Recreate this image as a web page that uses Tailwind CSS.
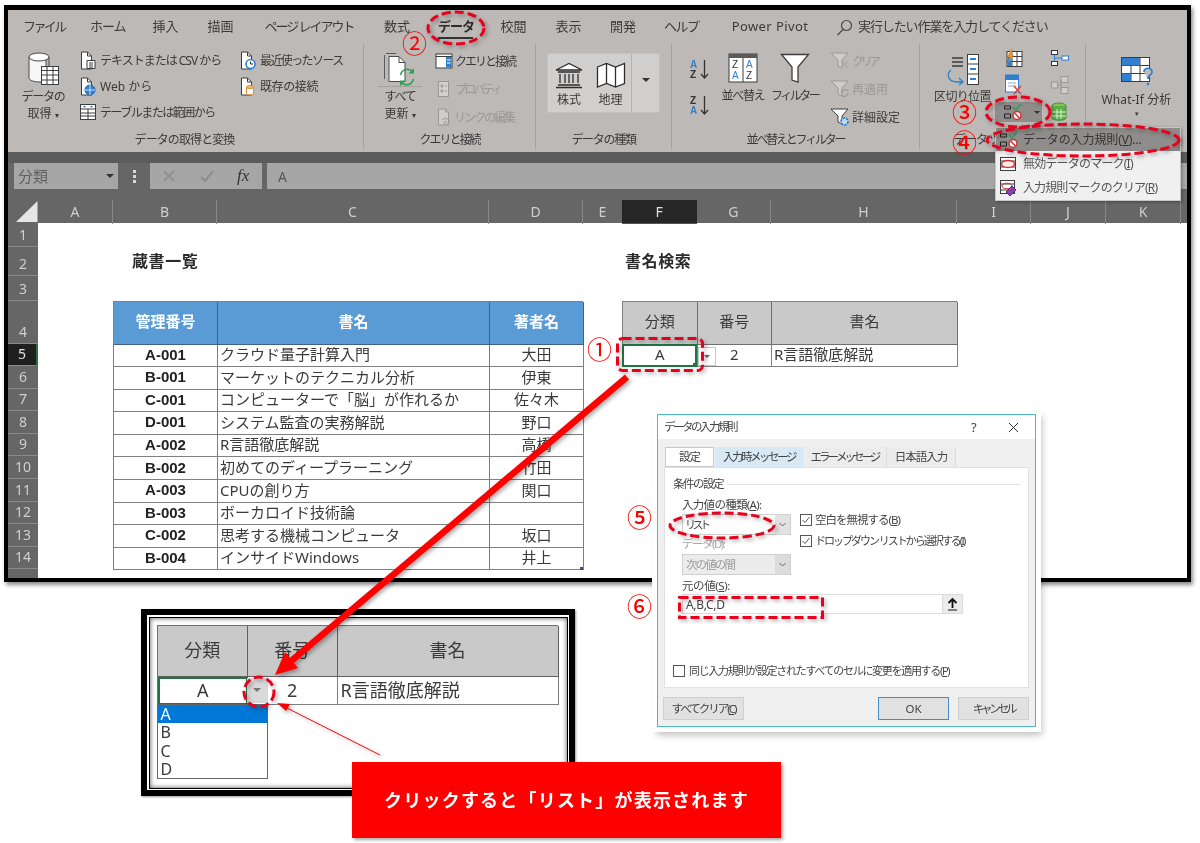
<!DOCTYPE html>
<html lang="ja">
<head>
<meta charset="UTF-8">
<title>データの入力規則</title>
<script src="https://cdn.jsdelivr.net/npm/@tailwindcss/browser@4"></script>
</head>
<body class="bg-white">
<div class="relative w-[1200px] h-[843px] overflow-hidden bg-white blur-[0.45px] font-['Noto_Sans','Noto_Sans_CJK_JP',sans-serif] text-[#3a3a3a]">

  <!-- Excel window -->
  <div class="ml-[4px] mt-[5px] w-[1187px] h-[577px] border-[4px] border-t-[5px] border-black shadow-[2px_3px_4px_rgba(0,0,0,.45)] overflow-hidden bg-white">

    <!-- tabs -->
    <div class="h-[37px] bg-[#bdb9b6] flex items-center pb-[3px] text-[13px] whitespace-nowrap">
      <span class="ml-[15px] w-[38px] text-center tracking-[-2.6px]">ファイル</span>
      <span class="ml-[29px] w-[34px] text-center tracking-[-1px]">ホーム</span>
      <span class="ml-[28px] w-[27px] text-center">挿入</span>
      <span class="ml-[28px] w-[27px] text-center">描画</span>
      <span class="ml-[30px] w-[90px] text-center tracking-[-2px]">ページ レイアウト</span>
      <span class="ml-[30px] w-[26px] text-center">数式</span>
      <span class="relative ml-[28px] w-[35px] text-center font-bold tracking-[-1px] text-[#2b2b2b]">データ<span class="absolute left-0 right-0 top-[20px] h-[2px] bg-[#333]"></span></span>
      <span class="ml-[27px] w-[27px] text-center">校閲</span>
      <span class="ml-[28px] w-[27px] text-center">表示</span>
      <span class="ml-[27px] w-[28px] text-center">開発</span>
      <span class="ml-[27px] w-[33px] text-center tracking-[-1.5px]">ヘルプ</span>
      <span class="ml-[33px] w-[80px] text-center tracking-[0.4px]">Power Pivot</span>
      <svg class="ml-[26px]" width="17" height="17" viewBox="0 0 17 17" fill="none" stroke="#4a4a4a" stroke-width="1.2"><circle cx="10.5" cy="6.5" r="5"/><path d="M7 10.5L1.5 16"/></svg>
      <span class="ml-[5px] w-[190px] tracking-[-1.1px]">実行したい作業を入力してください</span>
    </div>

    <!-- ribbon -->
    <div class="h-[105px] bg-[#bdb9b6] flex text-[12px] leading-[17px] whitespace-nowrap">
      <!-- データの取得と変換 -->
      <div class="w-[356px] -mt-[3px] h-[105px] border-r border-[#a4a19e] flex flex-col">
        <div class="h-[87px] pt-[3px] flex">
          <div class="ml-[9px] w-[52px] mt-[5px] flex flex-col items-center">
            <svg width="32" height="35" viewBox="0 0 32 35"><path d="M2 5v21c0 2 4 4 11 4h6V5z" fill="#f6f6f6" stroke="#4a4a4a"/><ellipse cx="12" cy="5" rx="10" ry="4" fill="#fff" stroke="#4a4a4a"/><path d="M22 5v9" stroke="#4a4a4a"/><rect x="14.500" y="14.500" width="17" height="18" fill="#fff" stroke="#3d3d3d"/><path d="M14.500 18.500h17M14.500 23h17M14.500 28h17M20 14.500v18M26 14.500v18" stroke="#3d3d3d" fill="none"/></svg>
            <span class="mt-[1px] tracking-[-1.2px]">データの</span>
            <span>取得 <span class="text-[8px]">▾</span></span>
          </div>
          <div class="ml-[11px] w-[160px] flex flex-col">
            <div class="h-[26px] flex items-center">
              <svg width="16" height="19" viewBox="0 0 16 19" fill="none" stroke="#3d3d3d"><path d="M1.500 1h6l4 4v13h-10z" fill="#fff"/><path d="M7.500 1v4h4"/><path d="M7 9.500h8v8H7z" fill="#fff"/><path d="M9 12h4M9 14h4M9 16h4"/></svg>
              <span class="ml-[4px] tracking-[-1px]">テキストまたは CSV から</span>
            </div>
            <div class="h-[26px] flex items-center">
              <svg width="16" height="19" viewBox="0 0 16 19" fill="none" stroke="#3d3d3d"><path d="M1.500 1h6l4 4v13h-10z" fill="#fff"/><path d="M7.500 1v4h4"/><circle cx="10" cy="13" r="5" fill="#2f7fce" stroke="#1d68b4"/><path d="M5 13h10M10 8v10" stroke="#cfe4f8"/></svg>
              <span class="ml-[4px]">Web から</span>
            </div>
            <div class="h-[26px] flex items-center -ml-[1px]">
              <svg width="17" height="18" viewBox="0 0 17 18" fill="none" stroke="#3d3d3d"><rect x="1.500" y="1.500" width="15" height="15" fill="#fff"/><path d="M1.500 6h15M1.500 10h15M1.500 13h15M9 6v10.500"/><path d="M4 3l1.500 2L7 3zM11 3l1.500 2L14 3z" fill="#3b83c9" stroke="none"/></svg>
              <span class="ml-[4px] tracking-[-1.5px]">テーブルまたは範囲から</span>
            </div>
          </div>
          <div class="w-[110px] flex flex-col">
            <div class="h-[26px] flex items-center">
              <svg width="16" height="19" viewBox="0 0 16 19" fill="none" stroke="#3d3d3d"><path d="M1.500 1h6l4 4v13h-10z" fill="#fff"/><path d="M7.500 1v4h4"/><circle cx="10.500" cy="13" r="4.500" fill="#fff" stroke="#2f7fce" stroke-width="1.600"/><path d="M10.500 10.500V13h2.500" stroke="#2b2b2b"/></svg>
              <span class="ml-[4px] tracking-[-1.6px]">最近使ったソース</span>
            </div>
            <div class="h-[26px] flex items-center">
              <svg width="16" height="19" viewBox="0 0 16 19" fill="none" stroke="#3d3d3d"><path d="M1.500 1h6l4 4v13h-10z" fill="#fff"/><path d="M7.500 1v4h4"/><path d="M6.500 10v7c0 1 7 1 7 0v-7" fill="#fff" stroke="#e08b2c"/><ellipse cx="10" cy="10" rx="3.500" ry="1.500" fill="#f3c07a" stroke="#e08b2c"/></svg>
              <span class="ml-[4px] tracking-[-0.4px]">既存の接続</span>
            </div>
          </div>
        </div>
        <div class="text-center tracking-[-0.9px] pr-[2px]">データの取得と変換</div>
      </div>
      <!-- クエリと接続 -->
      <div class="w-[172px] -mt-[3px] h-[105px] border-r border-[#a4a19e] flex flex-col">
        <div class="h-[87px] pt-[3px] flex">
          <div class="ml-[14px] w-[44px] mt-[5px] flex flex-col items-center">
            <svg width="34" height="35" viewBox="0 0 34 35" fill="none"><path d="M3 1.500h10M1.500 3v24" stroke="#5a5a5a"/><path d="M6 4.500h10l6 6v19H6z" fill="#fff" stroke="#4a4a4a"/><path d="M16 4.500v6h6" stroke="#4a4a4a"/><path d="M17.500 23a7 7 0 0 1 12-3.500M30.500 27a7 7 0 0 1-12 3.500" stroke="#2e9e52" stroke-width="1.500"/><path d="M31 16v5.500h-5.500zM17 34v-5.500h5.500z" fill="#2e9e52"/></svg>
            <div class="w-[44px] h-px bg-[#a4a19e] -mt-[1px] mb-[1px]"></div>
            <span class="tracking-[-1.2px]">すべて</span>
            <span>更新 <span class="text-[8px]">▾</span></span>
          </div>
          <div class="ml-[13px] flex flex-col">
            <div class="h-[28px] flex items-center">
              <svg width="18" height="16" viewBox="0 0 18 16" fill="none" stroke="#3d3d3d"><rect x="1" y="1" width="16" height="14" fill="#fff"/><path d="M1 3.500h16"/><rect x="11" y="4" width="5.500" height="10.500" fill="#2f7fce" stroke="none"/><path d="M12 7h3.500M12 10h3.500" stroke="#fff"/></svg>
              <span class="ml-[2px] tracking-[-2px]">クエリと接続</span>
            </div>
            <div class="h-[28px] flex items-center text-[#9a9896]">
              <svg width="18" height="18" viewBox="0 0 18 18" fill="#d3d0ce" stroke="#9a9896"><rect x="3.500" y="1.500" width="10" height="15"/><path d="M6 5h2v2H6zM6 10h2v2H6zM10 6h2M10 11h2" fill="none"/></svg>
              <span class="ml-[2px] tracking-[-2.800px]">プロパティ</span>
            </div>
            <div class="h-[28px] flex items-center text-[#9a9896]">
              <svg width="18" height="18" viewBox="0 0 18 18" fill="none" stroke="#9a9896"><path d="M3.500 1h7l3 3v13h-10z" fill="#cfccca"/><path d="M10.500 1v3h3"/><path d="M7 12c3-3 8-1 7 2s-5 3-5 1 3-2 3-1"/></svg>
              <span class="ml-[1px] tracking-[-2px]">リンクの編集</span>
            </div>
          </div>
        </div>
        <div class="text-center tracking-[-2px]">クエリと接続</div>
      </div>
      <!-- データの種類 -->
      <div class="w-[136px] -mt-[3px] h-[105px] border-r border-[#a4a19e] flex flex-col">
        <div class="h-[87px] pt-[9px] pl-[11px] flex">
          <div class="w-[113px] h-[60px] bg-[#d1cfcd] border border-[#c4c2c0] flex">
            <div class="w-[42px] flex flex-col items-center pt-[8px]">
              <svg width="30" height="27" viewBox="0 0 30 27" fill="none" stroke="#2e2e2e" stroke-width="1.300"><path d="M2 8L15 1.500 28 8z" fill="#fff"/><path d="M4 10h22M6 12v9M11 12v9M15 12v9M19 12v9M24 12v9M4 23h22M2 25.500h26"/></svg>
              <span class="mt-[2px]">株式</span>
            </div>
            <div class="w-[41px] flex flex-col items-center pt-[8px]">
              <svg width="30" height="27" viewBox="0 0 30 27" fill="#fff" stroke="#2e2e2e" stroke-width="1.300"><path d="M1.500 5l9-3.500 9 3.500 9-3.500v20l-9 3.500-9-3.500-9 3.500z"/><path d="M10.500 1.500v20M19.500 5v20" fill="none"/></svg>
              <span class="mt-[2px]">地理</span>
            </div>
            <div class="flex-1 border-l border-[#b5b3b1] flex items-center justify-center pb-[6px]">
              <span class="w-0 h-0 border-x-[4px] border-x-transparent border-t-[4px] border-t-[#333]"></span>
            </div>
          </div>
        </div>
        <div class="text-center tracking-[-1.3px]">データの種類</div>
      </div>
      <!-- 並べ替えとフィルター -->
      <div class="w-[248px] -mt-[3px] h-[105px] border-r border-[#a4a19e] flex flex-col">
        <div class="h-[87px] pt-[3px] flex">
          <div class="ml-[18px] w-[20px] flex flex-col pt-[11px] gap-[14px]">
            <svg width="20" height="22" viewBox="0 0 20 22" fill="none"><text x="0" y="10" font-size="10" font-weight="700" fill="#2f7fce" font-family="Liberation Sans">A</text><text x="0" y="20" font-size="10" font-weight="700" fill="#333" font-family="Liberation Sans">Z</text><path d="M14.500 2v18M11 16l3.500 4 3.500-4" stroke="#333" stroke-width="1.300"/></svg>
            <svg width="20" height="22" viewBox="0 0 20 22" fill="none"><text x="0" y="10" font-size="10" font-weight="700" fill="#333" font-family="Liberation Sans">Z</text><text x="0" y="20" font-size="10" font-weight="700" fill="#2f7fce" font-family="Liberation Sans">A</text><path d="M14.500 2v18M11 16l3.500 4 3.500-4" stroke="#333" stroke-width="1.300"/></svg>
          </div>
          <div class="ml-[10px] w-[46px] mt-[6px] flex flex-col items-center">
            <svg width="30" height="30" viewBox="0 0 30 30"><rect x="1" y="1" width="28" height="28" fill="#fff" stroke="#3d3d3d"/><rect x="1" y="1" width="28" height="4" fill="#5a5a5a"/><path d="M15 5v24" stroke="#3d3d3d"/><text x="4" y="15" font-size="10" font-weight="400" fill="#333" font-family="Liberation Sans">Z</text><text x="4" y="26" font-size="10" fill="#2f7fce" font-family="Liberation Sans">A</text><text x="18" y="15" font-size="10" fill="#2f7fce" font-family="Liberation Sans">A</text><text x="18" y="26" font-size="10" fill="#333" font-family="Liberation Sans">Z</text></svg>
            <span class="mt-[4px] tracking-[-1.3px]">並べ替え</span>
          </div>
          <div class="ml-[6px] w-[45px] mt-[6px] flex flex-col items-center">
            <svg width="30" height="30" viewBox="0 0 30 30"><path d="M1.500 1.500h27L18 14v15l-6-2V14z" fill="#fff" stroke="#3d3d3d" stroke-width="1.300"/></svg>
            <span class="mt-[4px] tracking-[-2.500px]">フィルター</span>
          </div>
          <div class="ml-[13px] flex flex-col">
            <div class="h-[28px] flex items-center text-[#9a9896]">
              <svg width="20" height="20" viewBox="0 0 20 20" fill="none" stroke="#9a9896"><path d="M1 2h17l-6 7v8l-4-2V9z" fill="#cfccca"/><path d="M11 10l7 7M18 10l-7 7" stroke="#adabaa" stroke-width="1.500"/></svg>
              <span class="ml-[2px] tracking-[-3.500px]">クリア</span>
            </div>
            <div class="h-[28px] flex items-center text-[#9a9896]">
              <svg width="20" height="20" viewBox="0 0 20 20" fill="none" stroke="#9a9896"><path d="M1 2h17l-6 7v8l-4-2V9z" fill="#cfccca"/><path d="M11 14a4 4 0 0 1 7-2M18 14a4 4 0 0 1-7 2" stroke-width="1.300"/></svg>
              <span class="ml-[2px]">再適用</span>
            </div>
            <div class="h-[28px] flex items-center">
              <svg width="20" height="20" viewBox="0 0 20 20" fill="none" stroke="#3d3d3d"><path d="M1 2h17l-6 7v8l-4-2V9z" fill="#fff"/><circle cx="14.500" cy="14.500" r="3.500" fill="#bfd9f2" stroke="#2f7fce" stroke-width="1.700" stroke-dasharray="2.500 1"/></svg>
              <span class="ml-[2px]">詳細設定</span>
            </div>
          </div>
        </div>
        <div class="text-center tracking-[-2.200px]">並べ替えとフィルター</div>
      </div>
      <!-- データ ツール -->
      <div class="w-[166px] -mt-[3px] h-[105px] border-r border-[#a4a19e] flex flex-col">
        <div class="h-[87px] flex">
          <div class="ml-[14px] w-[57px] mt-[9px] flex flex-col items-center">
            <svg width="34" height="33" viewBox="0 0 34 33" fill="none"><rect x="21.500" y="1.500" width="11" height="30" fill="#fff" stroke="#3d3d3d"/><path d="M21.500 11h11M21.500 21h11" stroke="#3d3d3d"/><path d="M24 6h6M24 16h6M24 26h6" stroke="#2f7fce" stroke-width="2"/><path d="M6 5h11M6 9h11M6 13h11" stroke="#3d3d3d" stroke-width="1.300"/><path d="M5 17c-5 4-3 12 6 12h6M13 25l4 4-4 3" stroke="#2f7fce" stroke-width="1.300"/></svg>
            <span class="mt-[2px] tracking-[-0.6px]">区切り位置</span>
          </div>
          <div class="ml-[4px] w-[47px] flex flex-col">
            <div class="h-[27px] flex items-center pl-[8px] pt-[1px]">
              <svg width="20" height="20" viewBox="0 0 20 20" fill="none"><rect x="4" y="3.500" width="15" height="15" fill="#fff" stroke="#3d3d3d"/><path d="M4 8.500h15M4 13.500h15M9 3.500v15M14 3.500v15" stroke="#3d3d3d"/><rect x="4.500" y="9" width="4" height="9" fill="#2f7fce"/><path d="M8 1L4 9h3l-2 6 6-8H8l2-6z" fill="#e8912d"/></svg>
            </div>
            <div class="h-[27px] flex items-center pl-[8px]">
              <svg width="20" height="21" viewBox="0 0 20 21" fill="none"><rect x="2.500" y="1" width="13" height="17" fill="#fff" stroke="#2f7fce"/><rect x="2.500" y="1" width="13" height="5" fill="#2f7fce"/><path d="M5 9h8M5 12h8" stroke="#7aaee0"/><path d="M11 12l7 8M18 12l-7 8" stroke="#d9443a" stroke-width="1.500"/></svg>
            </div>
            <div class="h-[20px] mt-[4px] bg-[#8f8d8b] flex items-center pl-[8px]">
              <svg width="20" height="18" viewBox="0 0 20 18" fill="none"><path d="M1.500 3h6M1.500 6h6M1.500 3v3M7.500 3v3M1.500 11h6M1.500 15h6M1.500 11v4M7.500 11v4" stroke="#222"/><path d="M10 4l3 3 5-6" stroke="#2e9e52" stroke-width="1.500"/><circle cx="14" cy="12.500" r="4" fill="#fff" stroke="#d32f2f" stroke-width="1.500"/><path d="M11.500 10l5 5" stroke="#d32f2f" stroke-width="1.500"/></svg>
              <span class="ml-[11px] w-0 h-0 border-x-[3px] border-x-transparent border-t-[3px] border-t-[#333]"></span>
            </div>
          </div>
          <div class="ml-[8px] w-[24px] flex flex-col">
            <div class="h-[27px] flex items-center pt-[1px]">
              <svg width="20" height="18" viewBox="0 0 20 18" fill="none"><rect x="1.500" y="1.500" width="6" height="4" stroke="#333" fill="#fff"/><rect x="1.500" y="12.500" width="6" height="4" stroke="#333" fill="#fff"/><rect x="12" y="7" width="6.500" height="4" stroke="#2f7fce" fill="#fff"/><path d="M4.500 5.500v7M4.500 9H12" stroke="#2f7fce"/></svg>
            </div>
            <div class="h-[27px] flex items-center">
              <svg width="20" height="20" viewBox="0 0 20 20" fill="#cfccca" stroke="#9a9896"><rect x="1.500" y="7" width="6" height="6"/><rect x="11" y="1.500" width="7" height="6"/><rect x="11" y="12.500" width="7" height="6"/><path d="M7.500 10H11M11 5v10" fill="none"/></svg>
            </div>
            <div class="h-[20px] mt-[4px] flex items-center">
              <svg width="18" height="20" viewBox="0 0 18 20" fill="none"><ellipse cx="9" cy="4" rx="7" ry="3" fill="#8ec04f" stroke="#3f8f3a"/><path d="M2 4v12c0 3 14 3 14 0V4" fill="#5bb04b" stroke="#3f8f3a"/><path d="M7 7v10M11 7v10M2 10h14M2 14h14" stroke="#dff0d0"/></svg>
            </div>
          </div>
        </div>
        <div class="pl-[34px] tracking-[-1px]">データ ツール</div>
      </div>
      <!-- What-If -->
      <div class="flex-1 -mt-[3px] h-[105px] flex flex-col items-center pt-[12px]">
        <svg width="34" height="31" viewBox="0 0 34 31" fill="none"><rect x="1.500" y="1.500" width="28" height="24" fill="#fff" stroke="#3d3d3d"/><path d="M1.500 9.500h28M1.500 17.500h28M11 1.500v24M20 1.500v24" stroke="#3d3d3d"/><rect x="2" y="2" width="9" height="7.500" fill="#2f7fce"/><rect x="11" y="2" width="9" height="7.500" fill="#2f7fce"/><rect x="2" y="17.500" width="9" height="7.500" fill="#2f7fce"/><path d="M24 16c0-5 8-5 8 0 0 3-4 3-4 7" stroke="#2f7fce" stroke-width="1.700" fill="#bdb9b6"/><circle cx="28" cy="28" r="1.300" fill="#2f7fce"/></svg>
        <span class="mt-[4px] tracking-[0.1px]">What-If 分析</span>
        <span class="mt-[1px] text-[7px] leading-[10px]">▾</span>
      </div>
    </div>

    <!-- dark strip -->
    <div class="h-[11px] bg-[#5c5c5c]"></div>

    <!-- formula bar -->
    <div class="h-[26px] bg-[#666666] flex text-[15px] text-[#5f5f5f]">
      <div class="ml-[6px] w-[104px] bg-[#a6a6a6] flex items-center justify-between pl-[4px] pr-[4px]">
        <span>分類</span>
        <span class="w-0 h-0 border-x-[4px] border-x-transparent border-t-[4px] border-t-[#333]"></span>
      </div>
      <div class="w-[32px] flex flex-col items-center justify-center gap-[2px]">
        <span class="w-[3px] h-[3px] bg-[#d8d8d8]"></span><span class="w-[3px] h-[3px] bg-[#d8d8d8]"></span><span class="w-[3px] h-[3px] bg-[#d8d8d8]"></span>
      </div>
      <div class="w-[112px] bg-[#a6a6a6] flex items-center pl-[12px] gap-[24px]">
        <svg width="14" height="14" viewBox="0 0 14 14" fill="none" stroke="#8c8c8c" stroke-width="1.600"><path d="M2 2l10 10M12 2L2 12"/></svg>
        <svg width="14" height="14" viewBox="0 0 14 14" fill="none" stroke="#8c8c8c" stroke-width="2"><path d="M1 8l4 4 8-10"/></svg>
        <span class="font-['Liberation_Serif',serif] italic text-[17px] text-[#333] -ml-[1px]">fx</span>
      </div>
      <div class="ml-[5px] flex-1 bg-[#a6a6a6] flex items-center pl-[11px] text-[#555] text-[14px]">A</div>
    </div>

    <div class="h-[11px] bg-[#666666]"></div>

    <!-- column headers -->
    <div class="h-[23px] bg-[#666666] grid grid-cols-[30px_75px_104px_272px_94px_39px_74.5px_74.5px_186px_74px_75px_75px_6px] text-[14px] text-[#cfcfcf] leading-[23px] text-center">
      <div class="pl-[8px]"><svg width="22" height="22" viewBox="0 0 22 22"><path d="M21.500 1v21H0z" fill="#e6e6e6"/></svg></div>
      <div class="border-r border-[#888]">A</div>
      <div class="border-r border-[#888]">B</div>
      <div class="border-r border-[#888]">C</div>
      <div class="border-r border-[#888]">D</div>
      <div>E</div>
      <div class="bg-[#262626] border-b border-[#217346] text-[#e0e0e0]">F</div>
      <div class="border-r border-[#888]">G</div>
      <div class="border-r border-[#888]">H</div>
      <div class="border-r border-[#888]">I</div>
      <div class="border-r border-[#888]">J</div>
      <div class="border-r border-[#888]">K</div>
      <div></div>
    </div>

    <!-- sheet -->
    <div class="flex h-[355px] overflow-hidden">
      <div id="row-heads" class="w-[30px] shrink-0 bg-[#666666] text-[14px] text-[#cfcfcf] grid grid-rows-[24px_29px_25px_42.5px_repeat(10,22.6px)_12px]"></div>
      <div class="flex-1 flex pt-[24px] pl-[75px]">
        <div class="w-[470px]">
          <div class="h-[29px] pl-[19px] pb-[2px] flex items-center text-[16px] font-bold text-[#2b2b2b] tracking-[0.6px]">蔵書一覧</div>
          <div class="h-[25px]"></div>
          <div id="books" class="grid grid-cols-[104px_272px_94px] grid-rows-[42.5px_repeat(10,22.6px)] border-l border-t border-[#808080] text-[15px] relative">
            <div class="bg-[#5b9bd5] border-r border-b border-[#44607c] pb-[4px] flex items-center justify-center text-white font-bold">管理番号</div>
            <div class="bg-[#5b9bd5] border-r border-b border-[#44607c] pb-[4px] flex items-center justify-center text-white font-bold">書名</div>
            <div class="bg-[#5b9bd5] border-r border-b border-[#44607c] pb-[4px] flex items-center justify-center text-white font-bold">著者名</div>
          </div>
        </div>
        <div class="ml-[39px] w-[335px]">
          <div class="h-[29px] pl-[3px] pb-[2px] flex items-center text-[16px] font-bold text-[#2b2b2b] tracking-[0.6px]">書名検索</div>
          <div class="h-[25px]"></div>
          <div class="relative grid grid-cols-[74.5px_74.5px_186px] grid-rows-[42.5px_22.6px] border-l border-t border-[#808080] text-[15px]">
            <div class="bg-[#c9c9c9] border-r border-b border-[#707070] pb-[4px] flex items-center justify-center">分類</div>
            <div class="bg-[#c9c9c9] border-r border-b border-[#707070] pb-[4px] flex items-center justify-center">番号</div>
            <div class="bg-[#c9c9c9] border-r border-b border-[#707070] pb-[4px] flex items-center justify-center">書名</div>
            <div class="border-r border-b border-[#808080] pb-[2px] flex items-center justify-center">A</div>
            <div class="border-r border-b border-[#808080] pb-[2px] flex items-center justify-center">2</div>
            <div class="border-r border-b border-[#808080] pb-[2px] flex items-center pl-[2px]">R言語徹底解説</div>
            <!-- selected cell + dropdown -->
            <div class="absolute left-[-1px] top-[42px] w-[75px] h-[23px] border-2 border-[#217346]"><span class="absolute right-[-2px] bottom-[-2px] w-[4px] h-[4px] bg-[#217346]"></span></div>
            <div class="absolute left-[75px] top-[45px] w-[18px] h-[19px] bg-white border border-[#c8c8c8] flex items-center justify-center">
              <span class="w-0 h-0 border-x-[3px] border-x-transparent border-t-[3px] border-t-[#666]"></span>
            </div>
          </div>
        </div>
      </div>
    </div>
  </div>

  <!-- ribbon menu -->
  <div class="absolute left-[995px] top-[127px] w-[186px] h-[74px] bg-[#f0f0f0] border border-[#c6c6c6] shadow-[1px_1px_3px_rgba(0,0,0,.3)] text-[12px] flex flex-col">
    <div class="h-[23px] bg-[#8f8d8b] flex items-center pl-[3px] text-[#333]">
      <svg width="20" height="18" viewBox="0 0 20 18" fill="none"><path d="M1.500 3h6M1.500 6h6M1.500 3v3M7.500 3v3M1.500 11h6M1.500 15h6M1.500 11v4M7.500 11v4" stroke="#222"/><path d="M10 4l3 3 5-6" stroke="#2e9e52" stroke-width="1.500"/><circle cx="14" cy="12.500" r="4" fill="#fff" stroke="#d32f2f" stroke-width="1.500"/><path d="M11.500 10l5 5" stroke="#d32f2f" stroke-width="1.500"/></svg>
      <span class="ml-[4px] tracking-[-0.1px]">データの入力規則(<u>V</u>)...</span>
    </div>
    <div class="h-[25px] flex items-center pl-[3px] text-[#555]">
      <svg width="18" height="16" viewBox="0 0 18 16" fill="none"><rect x="1.500" y="1.500" width="15" height="13" fill="#fff" stroke="#3d3d3d"/><path d="M1.500 5h15M1.500 11h15" stroke="#3d3d3d"/><ellipse cx="9" cy="8" rx="6.500" ry="3.500" fill="#fbeaea" stroke="#d32f2f" stroke-width="1.300"/></svg>
      <span class="ml-[6px] tracking-[-0.8px]">無効データのマーク(<u>I</u>)</span>
    </div>
    <div class="h-[24px] flex items-center pl-[3px] text-[#555]">
      <svg width="18" height="18" viewBox="0 0 18 18" fill="none"><rect x="1.500" y="1.500" width="14" height="13" fill="#fff" stroke="#3d3d3d"/><path d="M1.500 5h14M1.500 11h14" stroke="#3d3d3d"/><ellipse cx="8" cy="7" rx="5" ry="2.800" stroke="#d32f2f"/><path d="M7 13l6-6 4 4-6 6z" fill="#8a3fb5" stroke="#5e2a80"/></svg>
      <span class="ml-[6px] tracking-[-0.9px]">入力規則マークのクリア(<u>R</u>)</span>
    </div>
  </div>

  <!-- inset picture of the dropdown -->
  <div class="absolute left-[141px] top-[609px] w-[434px] h-[187px] bg-black p-[6px] shadow-[1px_1px_2px_rgba(0,0,0,.4)]">
    <div class="w-full h-full bg-white p-[1.5px]">
      <div class="relative w-full h-full bg-white border border-black shadow-[inset_0_0_5px_rgba(0,0,0,.7)] pl-[7px] pt-[7px] text-[18px]">
        <div class="w-[401px] grid grid-cols-[90.5px_89.5px_221px] grid-rows-[51.5px_27.5px] border-l border-t border-[#707070]">
          <div class="bg-[#c9c9c9] border-r border-b border-[#606060] flex items-center justify-center">分類</div>
          <div class="bg-[#c9c9c9] border-r border-b border-[#606060] flex items-center justify-center">番号</div>
          <div class="bg-[#c9c9c9] border-r border-b border-[#606060] flex items-center justify-center">書名</div>
          <div class="border-2 border-[#217346] flex items-center justify-center">A</div>
          <div class="border-r border-b border-[#808080] flex items-center justify-center">2</div>
          <div class="border-r border-b border-[#808080] flex items-center pl-[3px]">R言語徹底解説</div>
        </div>
        <div class="w-[111.5px] h-[75px] border border-[#666] bg-white text-[16px] leading-[18.5px] -mt-[1px] relative">
          <div class="bg-[#0078d7] text-white pl-[3px]">A</div>
          <div class="pl-[3px]">B</div>
          <div class="pl-[3px]">C</div>
          <div class="pl-[3px]">D</div>
        </div>
        <div class="absolute left-[97px] top-[60px] w-[21px] h-[25px] bg-[#d9d9d9] flex items-center justify-center">
          <span class="w-0 h-0 border-x-[4px] border-x-transparent border-t-[4px] border-t-[#777]"></span>
        </div>
      </div>
    </div>
  </div>

  <!-- data validation dialog -->
  <div class="absolute left-[657px] top-[414px] w-[379px] h-[313px] bg-[#f0f0f0] border border-[#4fb6c6] shadow-[0_0_0_5px_#fff,3px_5px_7px_3px_rgba(0,0,0,.25)] text-[11.5px] leading-[14px] text-[#444] flex flex-col whitespace-nowrap">
    <div class="h-[24px] bg-white flex items-center pl-[6px] shrink-0">
      <span class="tracking-[-2.500px]">データの入力規則</span>
      <span class="ml-[235px] text-[13px]">?</span>
      <svg class="ml-[31px]" width="11" height="11" viewBox="0 0 11 11" stroke="#333" stroke-width="1"><path d="M1 1l9 9M10 1l-9 9"/></svg>
    </div>
    <div class="flex pl-[7px] pt-[8px] h-[28px] shrink-0">
      <div class="w-[49px] bg-white border border-[#c8c8c8] flex items-center justify-center tracking-[-1px]">設定</div>
      <div class="ml-[1px] w-[88px] bg-[#d9e8f5] flex items-center justify-center tracking-[-2.500px]">入力時メッセージ</div>
      <div class="w-[84px] bg-[#ececec] border-r border-[#dcdcdc] flex items-center justify-center tracking-[-3px]">エラー メッセージ</div>
      <div class="w-[69px] bg-[#ececec] border-r border-[#dcdcdc] flex items-center justify-center tracking-[-1px]">日本語入力</div>
    </div>
    <div class="mx-[6px] h-[221px] bg-white border border-[#e0e0e0] shrink-0 pl-[8px] pt-[9px]">
      <div class="flex items-center pr-[7px]">
        <span class="tracking-[-1.500px]">条件の設定</span>
        <span class="ml-[4px] flex-1 h-px bg-[#e4e4e4]"></span>
      </div>
      <div class="pl-[9px] mt-[7px] flex">
        <div class="w-[118px]">
          <div class="h-[16px] tracking-[-0.7px]">入力値の種類(<u>A</u>):</div>
          <div class="w-[109px] h-[21px] border border-[#d0d0d0] bg-white flex">
            <span class="flex-1 pl-[2px] leading-[20px] tracking-[-3.500px] text-[11px]">リスト</span>
            <span class="w-[15px] bg-[#e2e2e2] flex items-center justify-center"><svg width="7" height="5" viewBox="0 0 7 5" fill="none" stroke="#666"><path d="M.5 1l3 3 3-3"/></svg></span>
          </div>
          <div class="mt-[2px] h-[16px] text-[#a8a8a8] tracking-[-1.500px]">データ(D):</div>
          <div class="mt-[1px] w-[109px] h-[21px] border border-[#d0d0d0] bg-[#ececec] flex text-[#9a9a9a]">
            <span class="flex-1 pl-[3px] leading-[20px] tracking-[-1.900px]">次の値の間</span>
            <span class="w-[15px] bg-[#dcdcdc] flex items-center justify-center"><svg width="7" height="5" viewBox="0 0 7 5" fill="none" stroke="#666"><path d="M.5 1l3 3 3-3"/></svg></span>
          </div>
        </div>
        <div class="pt-[12px]">
          <div class="flex items-center h-[20px]">
            <svg width="12" height="12" viewBox="0 0 12 12" fill="#fff" stroke="#555"><rect x=".5" y=".5" width="11" height="11"/><path d="M2.500 6l2.500 2.500 4.500-5.500" fill="none"/></svg>
            <span class="ml-[3px] tracking-[-1px]">空白を無視する(<u>B</u>)</span>
          </div>
          <div class="flex items-center h-[20px] mt-[1px]">
            <svg width="12" height="12" viewBox="0 0 12 12" fill="#fff" stroke="#555"><rect x=".5" y=".5" width="11" height="11"/><path d="M2.500 6l2.500 2.500 4.500-5.500" fill="none"/></svg>
            <span class="ml-[3px] text-[11px] tracking-[-2px]">ドロップダウン リストから選択する(<u>I</u>)</span>
          </div>
        </div>
      </div>
      <div class="pl-[9px] mt-[4px] h-[16px] tracking-[-0.4px]">元の値(<u>S</u>):</div>
      <div class="ml-[9px] -mt-[1px] w-[281px] h-[20px] border border-[#dcdcdc] bg-white flex">
        <span class="flex-1 pl-[3px] leading-[19px] text-[12px] tracking-[-0.3px]">A,B,C,D</span>
        <span class="w-[20px] bg-[#ececec] border-l border-[#dcdcdc] flex items-center justify-center"><svg width="11" height="14" viewBox="0 0 11 14" fill="none" stroke="#111" stroke-width="1.800"><path d="M5.500 11V2M1.500 6l4-4 4 4"/><path d="M1 13h9" stroke-width="1"/></svg></span>
      </div>
      <div class="mt-[50px] flex items-center">
        <svg width="12" height="12" viewBox="0 0 12 12" fill="#fff" stroke="#555"><rect x=".5" y=".5" width="11" height="11"/></svg>
        <span class="ml-[4px] text-[11px] tracking-[-1.300px]">同じ入力規則が設定されたすべてのセルに変更を適用する(<u>P</u>)</span>
      </div>
    </div>
    <div class="flex pl-[5px] pt-[9px]">
      <div class="w-[81px] h-[23px] bg-[#e1e1e1] border border-[#cfcfcf] flex items-center justify-center tracking-[-2px]">すべてクリア(<u>C</u>)</div>
      <div class="ml-[134px] w-[71px] h-[23px] bg-[#e1e1e1] border border-[#3f8fd0] flex items-center justify-center">OK</div>
      <div class="ml-[9px] w-[71px] h-[23px] bg-[#e1e1e1] border border-[#cfcfcf] flex items-center justify-center tracking-[-3.200px]">キャンセル</div>
    </div>
  </div>

  <!-- annotations: arrows and dashed marks -->
  <svg class="absolute left-0 top-0 w-[1200px] h-[843px] drop-shadow-[2px_2px_2px_rgba(0,0,0,.35)]" viewBox="0 0 1200 843" fill="none">
    <path d="M627 377L290 662" stroke="#f00" stroke-width="6.500"/>
    <path d="M275 675L285 652L298 668z" fill="#f00"/>
    <path d="M380 755L285 707" stroke="#f00" stroke-width="1"/>
    <path d="M277 703L290 704L286 711z" fill="#f00"/>
    <g stroke="#e8001c" stroke-width="3" stroke-dasharray="9 4">
      <ellipse cx="456" cy="28" rx="28" ry="16"/>
      <ellipse cx="1018" cy="112" rx="32" ry="15"/>
      <ellipse cx="1083" cy="140" rx="96" ry="16"/>
      <ellipse cx="722" cy="525.500" rx="52" ry="12.500"/>
      <rect x="617.500" y="338.500" width="85" height="32" rx="5"/>
      <rect x="679.500" y="597.500" width="143" height="20"/>
      <circle cx="259" cy="692" r="15"/>
    </g>
  </svg>
  <span class="absolute left-[402px] top-[27px] text-[25px] leading-[32px] text-[#f00]">②</span>
  <span class="absolute left-[587px] top-[333px] text-[25px] leading-[32px] text-[#f00]">①</span>
  <span class="absolute left-[952px] top-[96px] text-[25px] leading-[32px] text-[#f00] font-medium">③</span>
  <span class="absolute left-[952px] top-[126px] text-[25px] leading-[32px] text-[#f00] font-medium">④</span>
  <span class="absolute left-[627px] top-[501px] text-[25px] leading-[32px] text-[#f00] font-medium">⑤</span>
  <span class="absolute left-[627px] top-[590px] text-[25px] leading-[32px] text-[#f00] font-medium">⑥</span>

  <!-- callout -->
  <div class="absolute left-[352px] top-[762px] w-[429px] h-[76px] bg-[#f00] shadow-[2px_2px_3px_rgba(0,0,0,.35)] flex items-center justify-center text-white font-bold text-[18px] tracking-[1.2px]">クリックすると「リスト」が表示されます</div>
</div>

<script>
  const books = [
    ["A-001", "クラウド量子計算入門", "大田"],
    ["B-001", "マーケットのテクニカル分析", "伊東"],
    ["C-001", "コンピューターで「脳」が作れるか", "佐々木"],
    ["D-001", "システム監査の実務解説", "野口"],
    ["A-002", "R言語徹底解説", "高橋"],
    ["B-002", "初めてのディープラーニング", "竹田"],
    ["A-003", "CPUの創り方", "関口"],
    ["B-003", "ボーカロイド技術論", ""],
    ["C-002", "思考する機械コンピュータ", "坂口"],
    ["B-004", "インサイドWindows", "井上"],
  ];

  const table = document.getElementById("books");
  books.forEach(([id, title, author]) => {
    table.insertAdjacentHTML("beforeend", `
      <div class="border-r border-b border-[#808080] pb-[1px] flex items-center justify-center font-bold font-['Liberation_Sans',sans-serif] text-[#222]">${id}</div>
      <div class="border-r border-b border-[#808080] pb-[2px] flex items-center pl-[2px] whitespace-nowrap">${title}</div>
      <div class="border-r border-b border-[#808080] pb-[2px] flex items-center justify-center">${author}</div>`);
  });
  table.insertAdjacentHTML("beforeend", `<span class="absolute right-0 bottom-0 w-[3px] h-[3px] bg-[#2f528f]"></span>`);

  const heads = document.getElementById("row-heads");
  for (let n = 1; n <= 15; n++) {
    const state = n === 5 ? "bg-[#1f1f1f] border-r-2 border-r-[#217346] text-[#e0e0e0]" : "";
    const place = n === 15 ? "items-start pt-[6px]" : "items-end pb-[1px]";
    heads.insertAdjacentHTML("beforeend", `<div class="border-b border-[#8a8a8a] flex justify-center overflow-hidden ${place} ${state}">${n}</div>`);
  }
</script>
</body>
</html>
